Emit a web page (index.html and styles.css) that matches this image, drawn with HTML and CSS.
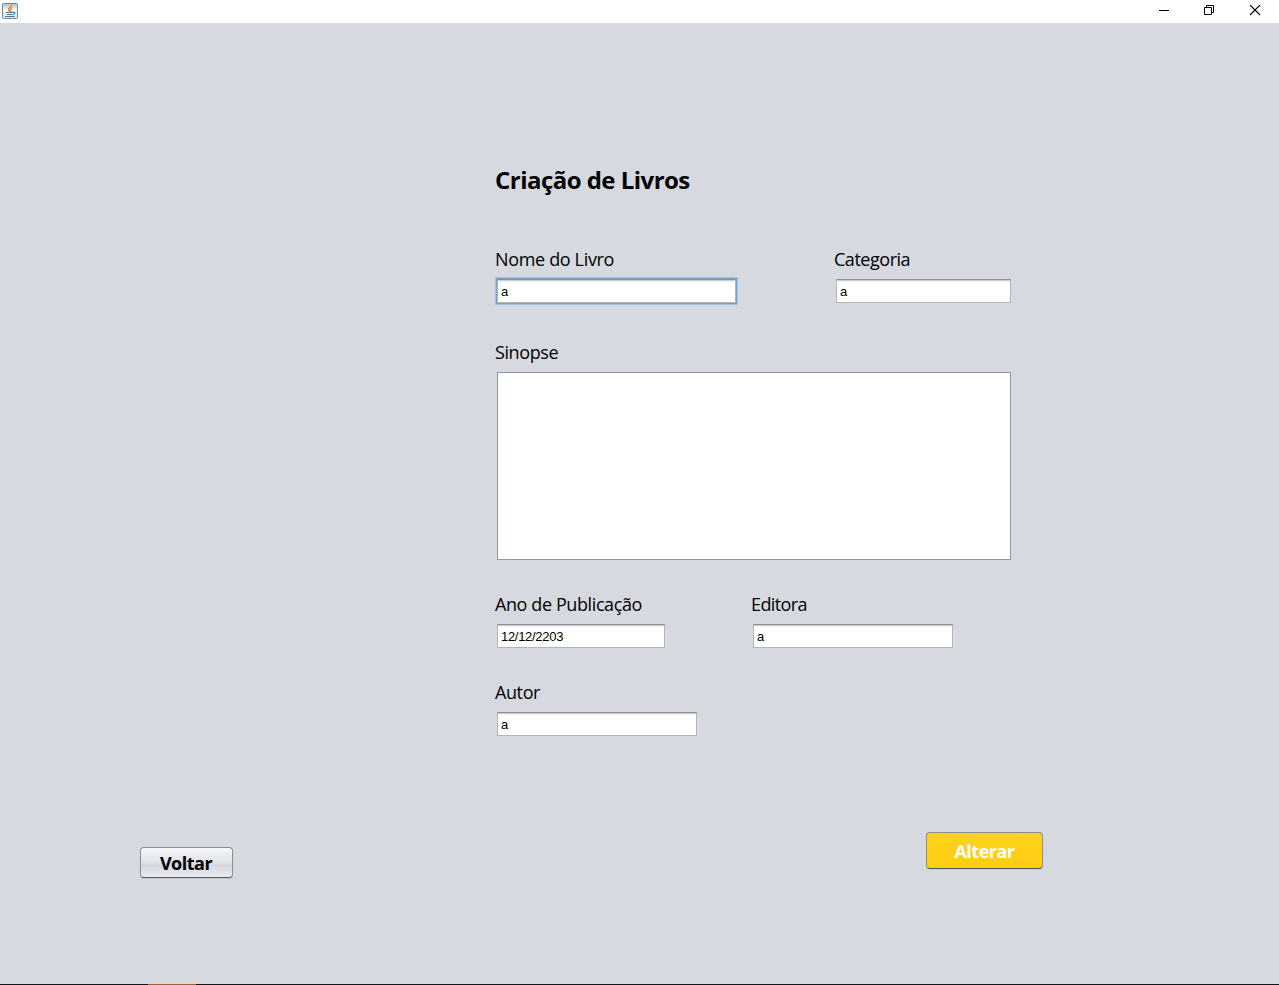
FILE: index.html
```html
<!DOCTYPE html>
<html lang="pt">
<head>
<meta charset="utf-8">
<title>Criação de Livros</title>
<link rel="stylesheet" href="styles.css">
</head>
<body>
<div class="window">
  <header class="titlebar">
    <svg class="app-icon" width="16" height="16" viewBox="0 0 16 16">
      <defs><linearGradient id="tile" x1="0" y1="0" x2="0" y2="1"><stop offset="0" stop-color="#a9bcc8"/><stop offset=".4" stop-color="#f6f8fa"/><stop offset="1" stop-color="#dbe3ea"/></linearGradient></defs>
      <rect x=".5" y=".5" width="15" height="15" rx="1" fill="url(#tile)" stroke="#71899a"/>
      <path d="M9.500 2C10 4 6 4.500 6.500 6.500C6.700 7.500 8 8 8 9M10.500 4.500C8 5.500 8 6.500 9 7.500C9.200 8 9 8.500 8.500 9" fill="none" stroke="#e8792b" stroke-width="1.300"/>
      <path d="M4 9.500H11M5 11.500H10.500M11 9.500C13.500 8.500 13.500 11 11 11.500M3 13.500H12.500" fill="none" stroke="#4b7b9f" stroke-width="1.100"/>
    </svg>
    <svg class="controls" width="102" height="12" viewBox="0 0 102 12" fill="none" stroke="#000">
      <path d="M0 5.500H10M45.500 2.500H52.500V9.500H45.500ZM47.500 2V.5H54.500V7.500H53"/>
      <path d="M91 0L101 10M101 0L91 10" stroke-width="1.100"/>
    </svg>
  </header>
  <main class="content">
    <form class="form">
      <h1 class="title">Criação de Livros</h1>
      <div class="row row-name">
        <div class="field"><label class="label l-name">Nome do Livro</label><div class="focus-ring"><div class="input w-name">a</div></div></div>
        <div class="field f-category"><label class="label l-category">Categoria</label><div class="input w-category">a</div></div>
      </div>
      <div class="row row-synopsis">
        <div class="field"><label class="label">Sinopse</label><div class="textarea"></div></div>
      </div>
      <div class="row row-year">
        <div class="field"><label class="label">Ano de Publicação</label><div class="input w-year">12/12/2203</div></div>
        <div class="field f-publisher"><label class="label l-publisher">Editora</label><div class="input w-text">a</div></div>
      </div>
      <div class="row">
        <div class="field"><label class="label">Autor</label><div class="input w-text">a</div></div>
      </div>
    </form>
    <div class="actions">
      <button class="button back">Voltar</button>
      <button class="button change">Alterar</button>
    </div>
  </main>
  <footer class="edge"><div class="edge-active"></div></footer>
</div>
</body>
</html>
```
FILE: styles.css
```css
* { box-sizing: border-box; }
body { margin: 0; overflow: hidden; font-family: "Open Sans", "Noto Sans", sans-serif; color: #000; }
.window { width: 1279px; height: 985px; display: flex; flex-direction: column; background: #d6d9df; }
.titlebar { flex: none; height: 23px; padding: 3px 18px 0 2px; display: flex; justify-content: space-between; background: #fff; }
.controls { margin-top: 2px; }
.content { flex: 1; min-height: 0; }
.form { width: 516px; margin-left: 495px; padding-top: 140px; height: 809px; }
.title { margin: 0; height: 34px; line-height: 34px; font-size: 24px; font-weight: 700; letter-spacing: -0.53px; white-space: nowrap; }
.row { display: flex; justify-content: space-between; }
.row-name { margin-top: 50px; height: 93px; }
.row-synopsis { height: 252px; }
.row-year { height: 88px; }
.field { display: flex; flex-direction: column; align-items: flex-start; }
.f-category { width: 177px; }
.f-publisher { width: 260px; }
.label { height: 24px; line-height: 24px; margin-bottom: 8px; font-size: 18px; letter-spacing: -0.4px; white-space: nowrap; }
.l-name { letter-spacing: -0.34px; }
.l-category { letter-spacing: -0.47px; }
.l-publisher { letter-spacing: -0.62px; }
.input { height: 24px; margin-left: 2px; padding: 2px 0 0 3px; border: 1px solid #b4b4b6; border-top-color: #8d8e91; background: linear-gradient(#d0d1d3 0 1px, #f0f0f1 1px 2px, #fff 2px); font: 13px/20px "Liberation Sans", Arial, sans-serif; }
.focus-ring { margin-top: -2px; padding: 1px; border: 1px solid #a5c0dd; background: #73a4d1; border-radius: 1px; }
.focus-ring .input { margin: 0; }
.w-name { width: 239px; }
.w-category { width: 175px; }
.w-year { width: 168px; letter-spacing: -0.3px; }
.w-text { width: 200px; }
.textarea { width: 514px; height: 188px; margin-left: 2px; border: 1px solid #9297a1; background: #fff; }
.actions { display: flex; justify-content: space-between; align-items: flex-start; padding: 0 236px 0 140px; }
.button { border: 1px solid #8a8d93; border-bottom-color: #55585e; border-radius: 4px; padding: 0; font: 700 18px/26px "Open Sans", sans-serif; letter-spacing: -0.5px; box-shadow: 0 1px 0 #c4c8cf; }
.back { width: 93px; height: 31px; margin-top: 15px; padding-right: 1px; background: linear-gradient(#f7f8fa, #dfe2e7 48%, #d5d8de 60%, #e9ecf2); }
.change { width: 117px; height: 37px; color: #fff; background: linear-gradient(#ffd21c, #ffcd12); }
.edge { flex: none; height: 1px; padding-left: 148px; background: #15151c; }
.edge-active { width: 48px; height: 1px; background: #a3622d; }
```
